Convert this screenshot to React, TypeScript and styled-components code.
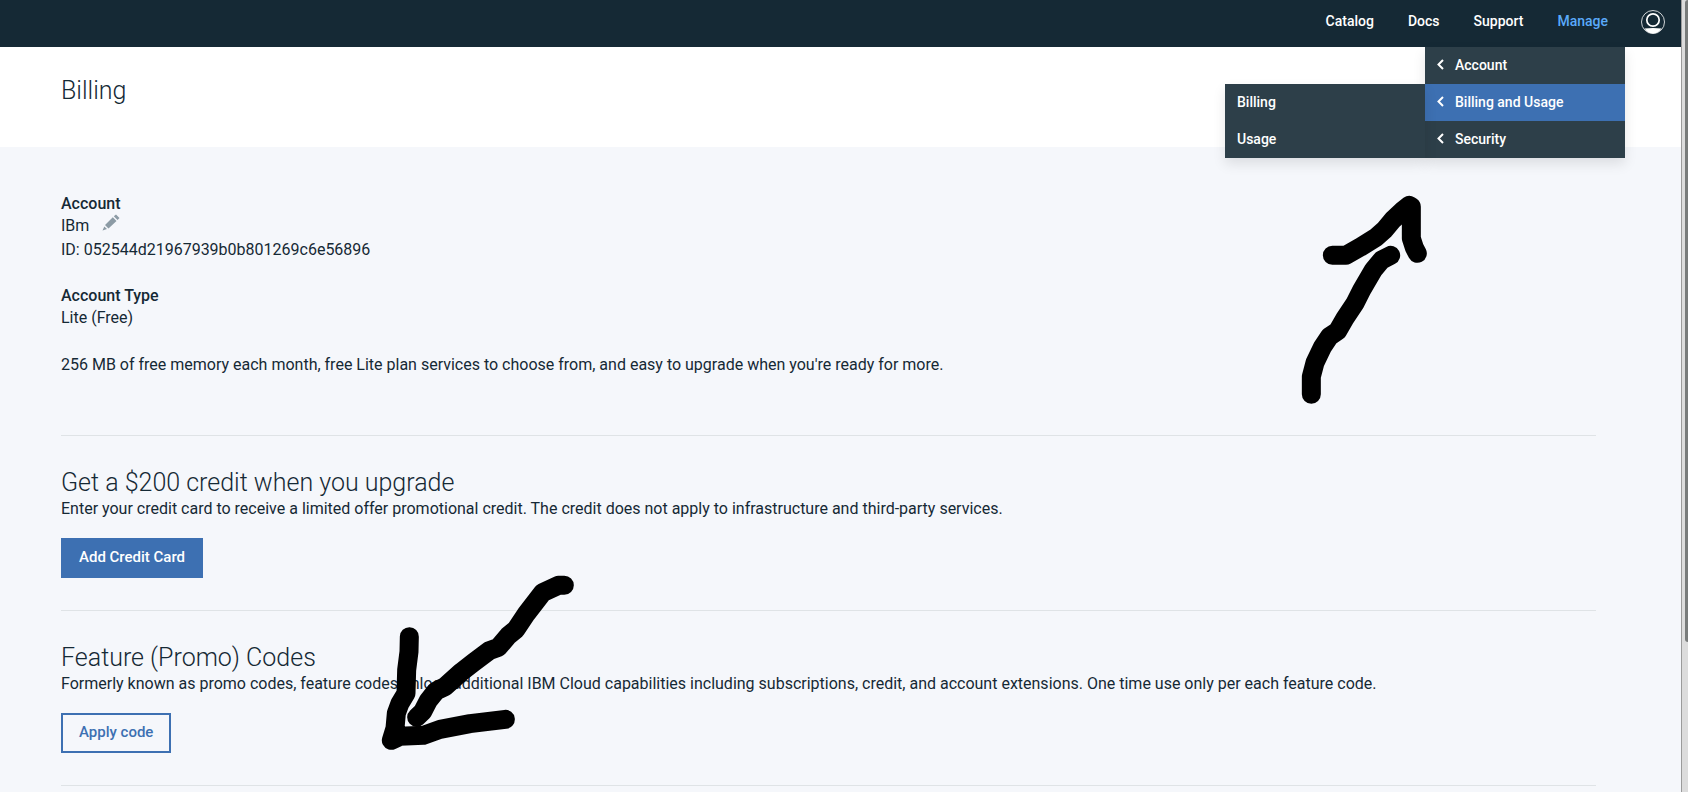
import React from "react";
import styled, { createGlobalStyle, css } from "styled-components";

const GlobalStyle = createGlobalStyle`
  *, *::before, *::after { box-sizing: border-box; }
  body {
    margin: 0;
    background: #f5f7fb;
    color: #152935;
    font-family: Roboto, "Liberation Sans", sans-serif;
    font-size: 16px;
  }
  h1, h2, h3, p, ul, dl, dd { margin: 0; padding: 0; }
  ul { list-style: none; }
  button { font-family: inherit; cursor: pointer; }
`;

const Window = styled.div`
  display: grid;
  grid-template-columns: minmax(0, 1fr) 7px;
  min-height: 100vh;
`;

const Page = styled.div`
  position: relative;
`;

const ScrollTrack = styled.div`
  height: 100vh;
  padding-left: 3px;
  background: #dcdcdc;
  border-left: 1px solid #9b9b9b;
`;

const ScrollThumb = styled.div`
  height: 81%;
  background: #787b7a;
  border-radius: 3px 0 0 3px;
`;

const Header = styled.header`
  display: flex;
  justify-content: flex-end;
  height: 47px;
  padding: 0 16px;
  background: #152935;
`;

const Nav = styled.nav`
  display: flex;
  gap: 34px;
  margin-right: 33px;
`;

const NavItem = styled.div`
  position: relative;
`;

const NavLink = styled.a<{ $active?: boolean }>`
  display: block;
  line-height: 42px;
  font-size: 14px;
  font-weight: 500;
  text-decoration: none;
  color: ${(p) => (p.$active ? "#5aaafa" : "#fff")};
`;

const AvatarButton = styled.button`
  display: flex;
  align-self: flex-start;
  margin-top: 10px;
  padding: 0;
  background: none;
  border: 0;
`;

const menuSurface = css`
  position: absolute;
  width: 200px;
  background: #2d3f49;
  box-shadow: 0 6px 12px rgba(0, 0, 0, 0.1);
`;

const Menu = styled.ul`
  ${menuSurface}
  top: 47px;
  right: -17px;
`;

const Submenu = styled.ul`
  ${menuSurface}
  top: 0;
  right: 100%;
`;

const MenuItem = styled.li`
  position: relative;
`;

const MenuLink = styled.a<{ $active?: boolean }>`
  display: flex;
  align-items: center;
  gap: 10px;
  height: 37px;
  padding: 0 12px 2px;
  font-size: 14px;
  font-weight: 500;
  text-decoration: none;
  white-space: nowrap;
  color: #fff;
  background: ${(p) => (p.$active ? "#3d70b2" : "transparent")};
`;

const TitleBar = styled.div`
  height: 100px;
  padding: 28px 61px;
  background: #fff;
`;

const Title = styled.h1`
  font-size: 25px;
  line-height: 32px;
  font-weight: 300;
`;

const Content = styled.main`
  padding: 0 85px 0 61px;
`;

const AccountSection = styled.section`
  height: 289px;
  padding-top: 46px;
  border-bottom: 1px solid #dfe3e6;
`;

const Label = styled.h2`
  font-size: 16px;
  line-height: 21px;
  font-weight: 500;
`;

const Text = styled.p`
  font-size: 16px;
  line-height: 24px;
`;

const AccountName = styled.div`
  display: flex;
  gap: 13px;
`;

const EditButton = styled.button`
  display: flex;
  align-items: center;
  height: 18px;
  padding: 0;
  background: none;
  border: 0;
`;

const Block = styled.div`
  margin-bottom: 23px;
`;

const OfferSection = styled.section`
  height: 175px;
  padding-top: 31px;
  border-bottom: 1px solid #dfe3e6;
`;

const OfferTitle = styled.h2`
  font-size: 25px;
  line-height: 31px;
  font-weight: 300;
`;

const OfferText = styled(Text)`
  line-height: 22px;
  margin-bottom: 18px;
`;

const Button = styled.button<{ $primary?: boolean }>`
  height: 40px;
  padding: 0 16px 2px;
  border: 2px solid #3d70b2;
  font-size: 15px;
  font-weight: 500;
  color: ${(p) => (p.$primary ? "#fff" : "#3d70b2")};
  background: ${(p) => (p.$primary ? "#3d70b2" : "transparent")};
`;

const Scribble = styled.svg`
  position: absolute;
  pointer-events: none;
  fill: none;
  stroke: #000;
  stroke-width: 57;
  stroke-linecap: round;
  stroke-linejoin: round;
`;

const UpArrow = styled(Scribble)`
  top: 180px;
  right: 211px;
`;

const DownArrow = styled(Scribble)`
  top: 560px;
  left: 370px;
`;

const Chevron = () => (
  <svg width="8" height="12" viewBox="0 0 8 12" fill="none" stroke="#fff" strokeWidth="2" aria-hidden="true">
    <path d="M6 1 1.500 5.500l4.500 4.500" />
  </svg>
);

const Avatar = () => (
  <svg width="24" height="24" viewBox="0 0 24 24" fill="none" stroke="#fff" aria-hidden="true">
    <circle cx="12" cy="12" r="11.5" strokeWidth="0.8" />
    <circle cx="12" cy="10" r="6.2" strokeWidth="1.7" />
    <path d="M3.500 18.400Q12 17.600 20.500 18.400A10.800 10.800 0 0 1 12 23.500a10.800 10.800 0 0 1-8.500-5.100z" fill="#fff" stroke="none" />
  </svg>
);

const Pencil = () => (
  <svg width="18" height="18" viewBox="0 0 18 18" fill="#8c9ba5" aria-hidden="true">
    <path d="M10.800 3.200 14.500 6.900 6.500 14.400 3 10.900zM11.800 2.300 14 .500 17.500 4 15.500 6zM2.300 12.400 5 15 .500 16.500z" />
  </svg>
);

const menuItems = ["Account", "Billing and Usage", "Security"];

export default function App() {
  return (
    <>
      <GlobalStyle />
      <Window>
        <Page>
          <Header>
            <Nav>
              <NavItem><NavLink href="#catalog">Catalog</NavLink></NavItem>
              <NavItem><NavLink href="#docs">Docs</NavLink></NavItem>
              <NavItem><NavLink href="#support">Support</NavLink></NavItem>
              <NavItem>
                <NavLink href="#manage" $active>Manage</NavLink>
                <Menu>
                  {menuItems.map((item) => {
                    const open = item === "Billing and Usage";
                    return (
                      <MenuItem key={item}>
                        <MenuLink href="#manage" $active={open}><Chevron />{item}</MenuLink>
                        {open && (
                          <Submenu>
                            <li><MenuLink href="#billing">Billing</MenuLink></li>
                            <li><MenuLink href="#usage">Usage</MenuLink></li>
                          </Submenu>
                        )}
                      </MenuItem>
                    );
                  })}
                </Menu>
              </NavItem>
            </Nav>
            <AvatarButton aria-label="Profile"><Avatar /></AvatarButton>
          </Header>
          <TitleBar><Title>Billing</Title></TitleBar>
          <Content>
            <AccountSection>
              <Block>
                <Label>Account</Label>
                <AccountName>
                  <Text>IBm</Text>
                  <EditButton aria-label="Edit account name"><Pencil /></EditButton>
                </AccountName>
                <Text>ID: 052544d21967939b0b801269c6e56896</Text>
              </Block>
              <Block>
                <Label>Account Type</Label>
                <Text>Lite (Free)</Text>
              </Block>
              <Text>256 MB of free memory each month, free Lite plan services to choose from, and easy to upgrade when you're ready for more.</Text>
            </AccountSection>
            <OfferSection>
              <OfferTitle>Get a $200 credit when you upgrade</OfferTitle>
              <OfferText>Enter your credit card to receive a limited offer promotional credit. The credit does not apply to infrastructure and third-party services.</OfferText>
              <Button $primary>Add Credit Card</Button>
            </OfferSection>
            <OfferSection>
              <OfferTitle>Feature (Promo) Codes</OfferTitle>
              <OfferText>Formerly known as promo codes, feature codes unlock additional IBM Cloud capabilities including subscriptions, credit, and account extensions. One time use only per each feature code.</OfferText>
              <Button>Apply code</Button>
            </OfferSection>
          </Content>
          <UpArrow width="200" height="240" viewBox="0 0 600 720" aria-hidden="true">
            <path d="M124 643V590L135 548 158 500 178 470 203 453 225 415 255 370 275 330 310 270 335 240 362 226" />
            <path d="M187 226H228L270 202 318 172 345 148 368 120 400 90 418 76 424 80V175L433 203 442 220" />
          </UpArrow>
          <DownArrow width="220" height="200" viewBox="0 0 660 600" aria-hidden="true">
            <path d="M583 76H565L518 98 470 160 438 208 415 227 385 262 358 272 310 308 275 335 225 380 198 393 175 422 158 455 140 472" />
            <path d="M118 230 117 275 110 330 108 400 90 430 79 460 75 505 64 541 90 529 160 526 210 508 300 491 406 478" />
          </DownArrow>
        </Page>
        <ScrollTrack><ScrollThumb /></ScrollTrack>
      </Window>
    </>
  );
}
